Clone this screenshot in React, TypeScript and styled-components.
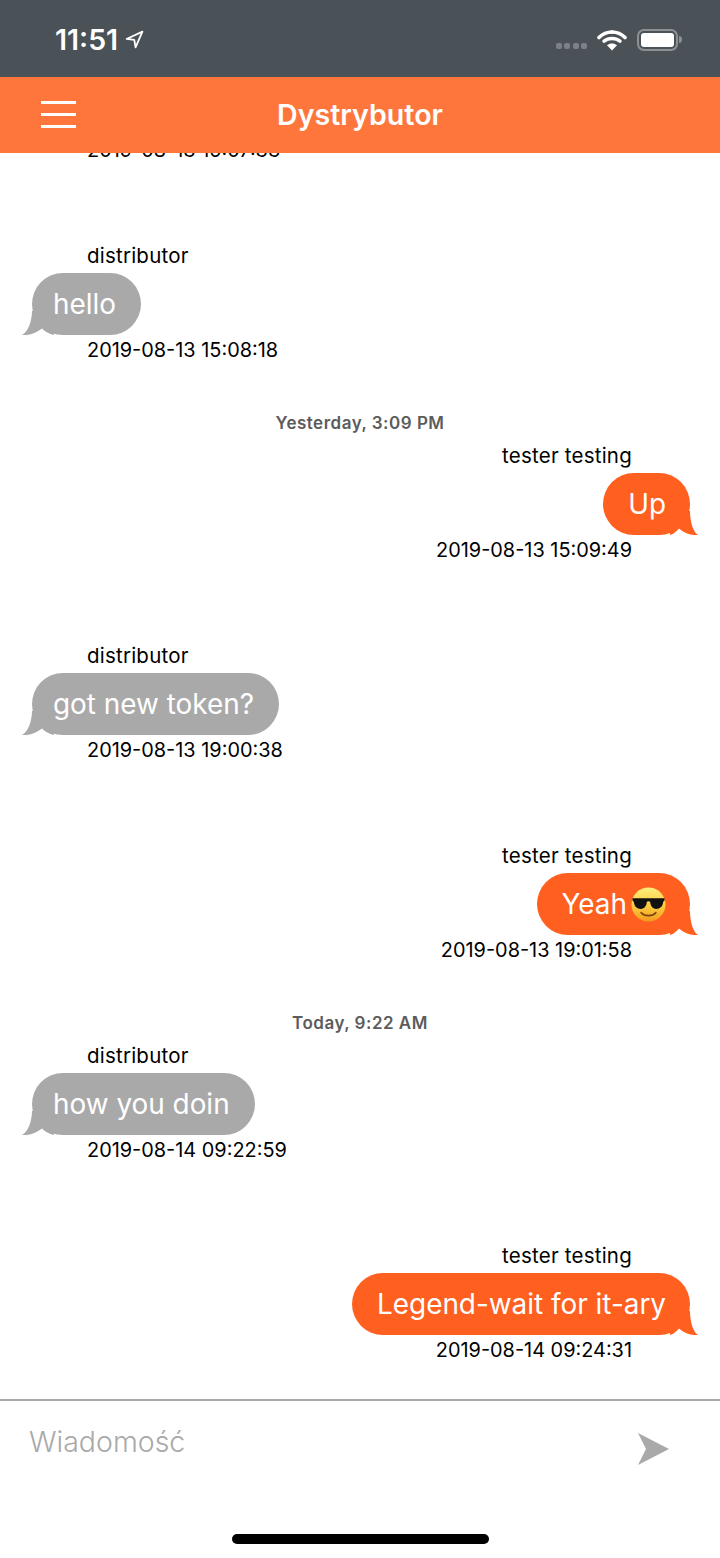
import React from "react";
import styled, { createGlobalStyle } from "styled-components";

const Global = createGlobalStyle`
  html, body { margin: 0; padding: 0; background: #fff; }
  body { font-family: Inter, "Noto Sans", "Liberation Sans", sans-serif; }
`;

const Page = styled.div`
  width: 720px;
  height: 1558px;
  display: flex;
  flex-direction: column;
  overflow: hidden;
  background: #fff;
`;

const StatusBar = styled.div`
  height: 77px;
  flex: none;
  background: #4a5157;
  display: flex;
  align-items: center;
  justify-content: space-between;
  padding: 2px 38px 0 55px;
  box-sizing: border-box;
  color: #fff;
`;

const Clock = styled.div`
  display: flex;
  align-items: center;
  gap: 7px;
  font-size: 28.5px;
  font-weight: 600;
`;

const StatusIcons = styled.div`
  display: flex;
  align-items: center;
`;

const SignalDots = styled.div`
  display: flex;
  gap: 2.5px;
  margin: 13px 10px 0 0;
`;

const Dot = styled.span`
  width: 6px;
  height: 6px;
  border-radius: 2px;
  background: #7b8186;
`;

const Battery = styled.div`
  display: flex;
  align-items: center;
  margin-left: 10px;
`;

const BatteryShell = styled.div`
  width: 41px;
  height: 22px;
  box-sizing: border-box;
  border: 2px solid #8b9095;
  border-radius: 7px;
  padding: 2px;
`;

const BatteryFill = styled.div`
  width: 100%;
  height: 100%;
  background: #fff;
  border-radius: 3px;
`;

const BatteryCap = styled.div`
  width: 3px;
  height: 7px;
  background: #8b9095;
  border-radius: 0 3px 3px 0;
  margin-left: 1px;
`;

const Header = styled.div`
  height: 76px;
  flex: none;
  box-sizing: border-box;
  padding-bottom: 1px;
  background: #ff763d;
  display: flex;
  align-items: center;
  justify-content: center;
  position: relative;
  z-index: 1;
`;

const Burger = styled.div`
  position: absolute;
  left: 41px;
  top: 24px;
  width: 35px;
  display: flex;
  flex-direction: column;
  gap: 9px;
`;

const BurgerLine = styled.span`
  height: 3px;
  background: #fff;
`;

const Title = styled.div`
  color: #fff;
  font-size: 28.6px;
  font-weight: 600;
`;

const ChatList = styled.div`
  flex: 1;
  min-height: 0;
  display: flex;
  flex-direction: column;
  justify-content: flex-end;
  overflow: hidden;
  padding-bottom: 36px;
`;

const Message = styled.div<{ $mine?: boolean }>`
  height: 200px;
  flex: none;
  display: flex;
  flex-direction: column;
  justify-content: flex-end;
  align-items: ${(p) => (p.$mine ? "flex-end" : "flex-start")};
`;

const DayLabel = styled.div`
  align-self: center;
  font-size: 17px;
  letter-spacing: 0.5px;
  font-weight: 600;
  color: #5c5c5c;
  height: 22px;
  line-height: 22px;
  margin-bottom: 9px;
`;

const Meta = styled.div<{ $mine?: boolean }>`
  line-height: 26px;
  color: #000;
  margin-left: ${(p) => (p.$mine ? "0" : "87px")};
  margin-right: ${(p) => (p.$mine ? "88px" : "0")};
`;

const Sender = styled(Meta)`
  font-size: 20.5px;
  letter-spacing: 0.22px;
  margin-bottom: 4px;
`;

const Stamp = styled(Meta)`
  font-size: 19.9px;
  margin-top: 2px;
`;

const Bubble = styled.div<{ $mine?: boolean }>`
  position: relative;
  isolation: isolate;
  height: 62px;
  box-sizing: border-box;
  border-radius: 31px;
  display: flex;
  align-items: center;
  font-size: 27.9px;
  color: #fff;
  background: ${(p) => (p.$mine ? "#ff5f1f" : "#a9a9a9")};
  padding: ${(p) => (p.$mine ? "0 24px 0 25px" : "0 25px 0 21px")};
  margin: ${(p) => (p.$mine ? "0 30px 0 0" : "0 0 0 32px")};
`;

const Tail = styled.svg<{ $mine?: boolean }>`
  position: absolute;
  bottom: 0;
  z-index: -1;
  height: 24px;
  width: ${(p) => (p.$mine ? "28px" : "32px")};
  ${(p) => (p.$mine ? "right: -8px;" : "left: -10px;")}
`;

const Composer = styled.div`
  flex: none;
  height: 159px;
  box-sizing: border-box;
  border-top: 2px solid #a9a9a9;
  display: flex;
  flex-direction: column;
`;

const InputRow = styled.div`
  display: flex;
  justify-content: space-between;
  align-items: flex-start;
  padding: 23px 51px 0 29px;
`;

const Placeholder = styled.div`
  font-size: 28.5px;
  line-height: 36px;
  color: #a9a9a9;
  font-weight: 300;
`;

const SendIcon = styled.svg`
  width: 31px;
  height: 32px;
  margin-top: 9px;
`;

const HomeBar = styled.div`
  width: 257px;
  height: 10px;
  border-radius: 5px;
  background: #000;
  align-self: center;
  margin-top: 69px;
`;

function BubbleTail({ mine, color }: { mine?: boolean; color: string }) {
  return mine ? (
    <Tail $mine viewBox="0 0 28 24">
      <path d="M20 0 C20 10 23 21 28 24 C23 24.5 15 23 9 17.5 C6 20.5 4 23 0 24 L0 0 Z" fill={color} />
    </Tail>
  ) : (
    <Tail viewBox="0 0 32 24">
      <path d="M10 0 C10 10 6 21 0 24 C5 24.5 13 23 20 17.5 C23 20.5 27 23 32 24 L32 0 Z" fill={color} />
    </Tail>
  );
}

const EmojiIcon = styled.svg`
  width: 35px;
  height: 35px;
  margin-left: 4px;
  flex: none;
`;

function CoolEmoji() {
  return (
    <EmojiIcon viewBox="0 0 36 36">
      <defs>
        <linearGradient id="face" x1="0" y1="0" x2="0" y2="1">
          <stop offset="0" stopColor="#ffee7a" />
          <stop offset="0.6" stopColor="#fcc63c" />
          <stop offset="1" stopColor="#f29a1e" />
        </linearGradient>
      </defs>
      <circle cx="18" cy="18" r="17.5" fill="url(#face)" />
      <path d="M1.5 11.5 H34.5 V14 C33.5 15 33.3 15 33 16 C32.4 20.5 29.5 22.5 26 22.5 C22 22.5 20 19.5 19.8 15.5 C19 14.5 17 14.5 16.2 15.5 C16 19.5 14 22.5 10 22.5 C6.5 22.5 3.6 20.5 3 16 C2.7 15 2.5 15 1.5 14 Z" fill="#111" />
      <path d="M10.5 26.5 C14 30.5 22 30.5 25.5 26.5" fill="none" stroke="#7a4512" strokeWidth="1.8" strokeLinecap="round" />
    </EmojiIcon>
  );
}

type Msg = { mine?: boolean; day?: string; sender: string; text: string; time: string; cool?: boolean };

const messages: Msg[] = [
  { sender: "distributor", text: "hello", time: "2019-08-13 15:07:33" },
  { sender: "distributor", text: "hello", time: "2019-08-13 15:08:18" },
  { mine: true, day: "Yesterday, 3:09 PM", sender: "tester testing", text: "Up", time: "2019-08-13 15:09:49" },
  { sender: "distributor", text: "got new token?", time: "2019-08-13 19:00:38" },
  { mine: true, sender: "tester testing", text: "Yeah", cool: true, time: "2019-08-13 19:01:58" },
  { day: "Today, 9:22 AM", sender: "distributor", text: "how you doin", time: "2019-08-14 09:22:59" },
  { mine: true, sender: "tester testing", text: "Legend-wait for it-ary", time: "2019-08-14 09:24:31" },
];

export default function App() {
  return (
    <Page>
      <Global />
      <StatusBar>
        <Clock>
          11:51
          <svg width="19" height="19" viewBox="0 0 18 18">
            <path d="M16.5 1.5 L1.5 8.5 L8.8 9.4 L10 16.5 Z" fill="none" stroke="#fff" strokeWidth="1.7" strokeLinejoin="round" />
          </svg>
        </Clock>
        <StatusIcons>
          <SignalDots>
            <Dot />
            <Dot />
            <Dot />
            <Dot />
          </SignalDots>
          <svg width="30" height="22" viewBox="0 0 30 22">
            <path d="M15 3 C20 3 24.5 5 28 8.5" fill="none" stroke="#fff" strokeWidth="3.6" strokeLinecap="round" />
            <path d="M15 3 C10 3 5.5 5 2 8.5" fill="none" stroke="#fff" strokeWidth="3.6" strokeLinecap="round" />
            <path d="M7 12.2 C11.5 8.6 18.5 8.6 23 12.2" fill="none" stroke="#fff" strokeWidth="3.4" strokeLinecap="round" />
            <path d="M15 21.5 L10 16.2 C13 13.8 17 13.8 20 16.2 Z" fill="#fff" />
          </svg>
          <Battery>
            <BatteryShell>
              <BatteryFill />
            </BatteryShell>
            <BatteryCap />
          </Battery>
        </StatusIcons>
      </StatusBar>
      <Header>
        <Burger>
          <BurgerLine />
          <BurgerLine />
          <BurgerLine />
        </Burger>
        <Title>Dystrybutor</Title>
      </Header>
      <ChatList>
        {messages.map((m, i) => (
          <Message key={i} $mine={m.mine}>
            {m.day && <DayLabel>{m.day}</DayLabel>}
            <Sender $mine={m.mine}>{m.sender}</Sender>
            <Bubble $mine={m.mine}>
              <BubbleTail mine={m.mine} color={m.mine ? "#ff5f1f" : "#a9a9a9"} />
              {m.text}
              {m.cool && <CoolEmoji />}
            </Bubble>
            <Stamp $mine={m.mine}>{m.time}</Stamp>
          </Message>
        ))}
      </ChatList>
      <Composer>
        <InputRow>
          <Placeholder>Wiadomość</Placeholder>
          <SendIcon viewBox="0 0 31 32">
            <path d="M0 0 L31 16 L0 32 L8 16 Z" fill="#a9a9a9" />
          </SendIcon>
        </InputRow>
        <HomeBar />
      </Composer>
    </Page>
  );
}
